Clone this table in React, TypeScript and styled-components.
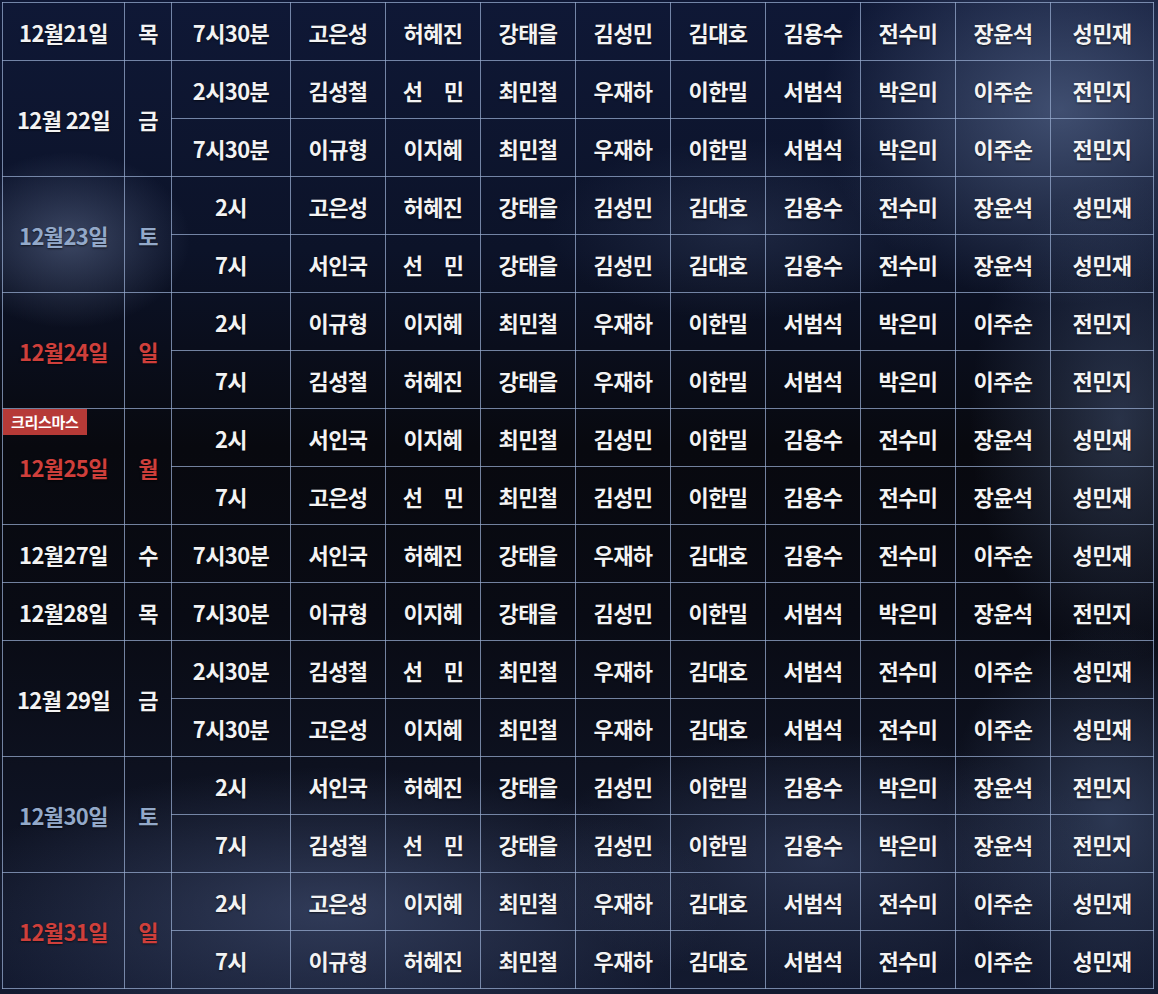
import styled, { createGlobalStyle } from "styled-components";

type Tone = "normal" | "sat" | "sun";

interface Slot {
  time: string;
  cast: string[];
}

interface Day {
  date: string;
  weekday: string;
  tone: Tone;
  badge?: string;
  slots: Slot[];
}

const n = (s: string) => s.split(" ").map((x) => (x === "선민" ? "선　민" : x));

const days: Day[] = [
  { date: "12월21일", weekday: "목", tone: "normal", slots: [
    { time: "7시30분", cast: n("고은성 허혜진 강태을 김성민 김대호 김용수 전수미 장윤석 성민재") },
  ] },
  { date: "12월 22일", weekday: "금", tone: "normal", slots: [
    { time: "2시30분", cast: n("김성철 선민 최민철 우재하 이한밀 서범석 박은미 이주순 전민지") },
    { time: "7시30분", cast: n("이규형 이지혜 최민철 우재하 이한밀 서범석 박은미 이주순 전민지") },
  ] },
  { date: "12월23일", weekday: "토", tone: "sat", slots: [
    { time: "2시", cast: n("고은성 허혜진 강태을 김성민 김대호 김용수 전수미 장윤석 성민재") },
    { time: "7시", cast: n("서인국 선민 강태을 김성민 김대호 김용수 전수미 장윤석 성민재") },
  ] },
  { date: "12월24일", weekday: "일", tone: "sun", slots: [
    { time: "2시", cast: n("이규형 이지혜 최민철 우재하 이한밀 서범석 박은미 이주순 전민지") },
    { time: "7시", cast: n("김성철 허혜진 강태을 우재하 이한밀 서범석 박은미 이주순 전민지") },
  ] },
  { date: "12월25일", weekday: "월", tone: "sun", badge: "크리스마스", slots: [
    { time: "2시", cast: n("서인국 이지혜 최민철 김성민 이한밀 김용수 전수미 장윤석 성민재") },
    { time: "7시", cast: n("고은성 선민 최민철 김성민 이한밀 김용수 전수미 장윤석 성민재") },
  ] },
  { date: "12월27일", weekday: "수", tone: "normal", slots: [
    { time: "7시30분", cast: n("서인국 허혜진 강태을 우재하 김대호 김용수 전수미 이주순 성민재") },
  ] },
  { date: "12월28일", weekday: "목", tone: "normal", slots: [
    { time: "7시30분", cast: n("이규형 이지혜 강태을 김성민 이한밀 서범석 박은미 장윤석 전민지") },
  ] },
  { date: "12월 29일", weekday: "금", tone: "normal", slots: [
    { time: "2시30분", cast: n("김성철 선민 최민철 우재하 김대호 서범석 전수미 이주순 성민재") },
    { time: "7시30분", cast: n("고은성 이지혜 최민철 우재하 김대호 서범석 전수미 이주순 성민재") },
  ] },
  { date: "12월30일", weekday: "토", tone: "sat", slots: [
    { time: "2시", cast: n("서인국 허혜진 강태을 김성민 이한밀 김용수 박은미 장윤석 전민지") },
    { time: "7시", cast: n("김성철 선민 강태을 김성민 이한밀 김용수 박은미 장윤석 전민지") },
  ] },
  { date: "12월31일", weekday: "일", tone: "sun", slots: [
    { time: "2시", cast: n("고은성 이지혜 최민철 우재하 김대호 서범석 전수미 이주순 성민재") },
    { time: "7시", cast: n("이규형 허혜진 최민철 우재하 김대호 서범석 전수미 이주순 성민재") },
  ] },
];

const colWidths = [122, 47, 119, 95, 95, 95, 95, 95, 95, 95, 95, 103];

const toneColor: Record<Tone, string> = {
  normal: "#f3f3f3",
  sat: "#93a9c9",
  sun: "#cf3f3b",
};

export default function App() {
  return (
    <>
      <GlobalStyle />
      <Board>
        <Schedule>
          <colgroup>
            {colWidths.map((w, i) => (
              <col key={i} style={{ width: w }} />
            ))}
          </colgroup>
          <tbody>
            {days.map((day) =>
              day.slots.map((slot, si) => (
                <Row key={day.date + slot.time}>
                  {si === 0 && (
                    <>
                      <DateCell rowSpan={day.slots.length} $tone={day.tone}>
                        {day.badge && <Badge>{day.badge}</Badge>}
                        {day.date}
                      </DateCell>
                      <DateCell rowSpan={day.slots.length} $tone={day.tone}>
                        {day.weekday}
                      </DateCell>
                    </>
                  )}
                  <Cell>{slot.time}</Cell>
                  {slot.cast.map((name, ci) => (
                    <Cell key={ci}>{name}</Cell>
                  ))}
                </Row>
              ))
            )}
          </tbody>
        </Schedule>
      </Board>
    </>
  );
}

const GlobalStyle = createGlobalStyle`
  html, body {
    margin: 0;
    padding: 0;
    background: #0b1022;
  }
  body {
    font-family: "Noto Sans CJK KR", "Noto Sans", sans-serif;
  }
`;

const Board = styled.div`
  width: 1158px;
  height: 994px;
  padding: 2px 0 0 2px;
  box-sizing: border-box;
  overflow: hidden;
  background:
    radial-gradient(ellipse 320px 260px at 1060px 110px, rgba(105, 125, 165, 0.55), transparent 75%),
    radial-gradient(ellipse 200px 320px at 1120px 420px, rgba(85, 105, 145, 0.42), transparent 75%),
    radial-gradient(ellipse 260px 120px at 740px 230px, rgba(70, 85, 120, 0.3), transparent 75%),
    radial-gradient(ellipse 150px 110px at 70px 240px, rgba(105, 120, 155, 0.5), transparent 80%),
    radial-gradient(ellipse 520px 190px at 330px 910px, rgba(80, 95, 135, 0.5), transparent 75%),
    radial-gradient(ellipse 380px 170px at 820px 860px, rgba(70, 85, 125, 0.4), transparent 75%),
    radial-gradient(ellipse 220px 260px at 1110px 820px, rgba(80, 100, 140, 0.45), transparent 75%),
    linear-gradient(180deg, #0f1836 0%, #0c1329 25%, #08090f 45%, #090b14 62%, #131a30 100%);
`;

const Schedule = styled.table`
  table-layout: fixed;
  width: 1151px;
  border-collapse: collapse;
  border: 1.5px solid rgba(150, 170, 205, 0.8);
`;

const Row = styled.tr`
  height: 58px;
`;

const Cell = styled.td`
  padding: 0;
  border: 1.5px solid rgba(150, 170, 205, 0.75);
  text-align: center;
  vertical-align: middle;
  color: #f3f3f3;
  font-size: 22px;
  font-weight: 700;
  letter-spacing: -0.6px;
  white-space: nowrap;
  text-shadow: 0 1px 2px rgba(0, 0, 0, 0.6);
`;

const DateCell = styled(Cell)<{ $tone: Tone }>`
  position: relative;
  color: ${({ $tone }) => toneColor[$tone]};
`;

const Badge = styled.span`
  position: absolute;
  top: 0;
  left: 0;
  padding: 0 8px;
  height: 26px;
  line-height: 26px;
  background: #b63a37;
  color: #ffffff;
  font-size: 15px;
  font-weight: 700;
  letter-spacing: -0.3px;
  text-shadow: none;
`;
